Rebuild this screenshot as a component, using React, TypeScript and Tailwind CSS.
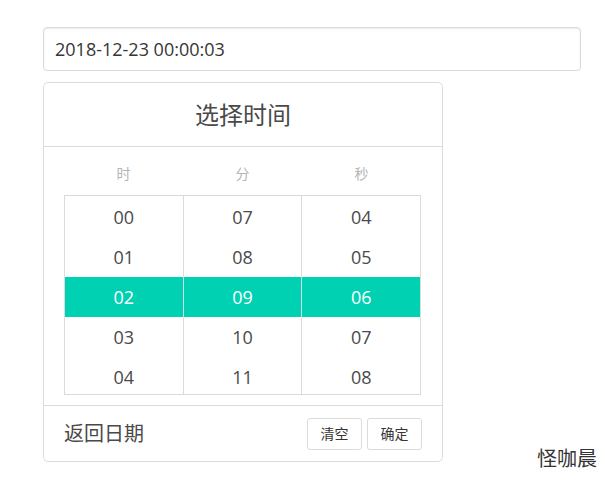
import React from 'react';

const hours = ['00', '01', '02', '03', '04'];
const minutes = ['07', '08', '09', '10', '11'];
const seconds = ['04', '05', '06', '07', '08'];

function Column({ items, first }: { items: string[]; first?: boolean }) {
  return (
    <div className={`flex-1 h-[198px] overflow-hidden ${first ? '' : 'border-l border-[#dbdbdb]'}`}>
      <div className="pt-[1px]">
        {items.map((v, i) => (
          <div
            key={v}
            className={`h-[40px] flex items-center justify-center text-[18px] ${
              i === 2 ? 'bg-[#00d1b2] text-white' : 'text-[#4a4a4a]'
            }`}
          >
            {v}
          </div>
        ))}
      </div>
    </div>
  );
}

export default function App() {
  return (
    <div
      className="relative w-[605px] h-[482px] bg-white pt-[27px] pl-[43px]"
      style={{ fontFamily: '"Open Sans", "Noto Sans CJK SC", sans-serif' }}
    >
      {/* Input */}
      <div className="w-[538px] h-[44px] border border-[#dbdbdb] rounded-[4px] shadow-[inset_0_1px_2px_rgba(10,10,10,0.08)] flex items-center px-[11px] text-[18px] text-[#363636]">
        2018-12-23 00:00:03
      </div>

      {/* Picker panel */}
      <div className="mt-[11px] w-[400px] border border-[#dbdbdb] rounded-[5px] bg-white">
        <div className="h-[64px] border-b border-[#dbdbdb] flex items-center justify-center text-[24px] text-[#4a4a4a]">
          选择时间
        </div>
        <div className="pl-[20px] pr-[21px] pt-[16px] pb-[10px]">
          <div className="flex h-[32px] items-start text-[14px] text-[#b5b5b5]">
            <div className="flex-1 text-center">时</div>
            <div className="flex-1 text-center">分</div>
            <div className="flex-1 text-center">秒</div>
          </div>
          <div className="flex border border-[#dbdbdb]">
            <Column items={hours} first />
            <Column items={minutes} />
            <Column items={seconds} />
          </div>
        </div>
        <div className="h-[56px] border-t border-[#dbdbdb] flex items-center justify-between pl-[20px] pr-[20px]">
          <span className="text-[20px] text-[#4a4a4a]">返回日期</span>
          <div className="flex gap-[5px]">
            <button className="w-[55px] h-[32px] border border-[#dbdbdb] rounded-[3px] text-[14px] text-[#363636] bg-white">
              清空
            </button>
            <button className="w-[55px] h-[32px] border border-[#dbdbdb] rounded-[3px] text-[14px] text-[#363636] bg-white">
              确定
            </button>
          </div>
        </div>
      </div>

      <div className="absolute right-[8px] bottom-[8px] text-[20px] text-[#333]">怪咖晨</div>
    </div>
  );
}
